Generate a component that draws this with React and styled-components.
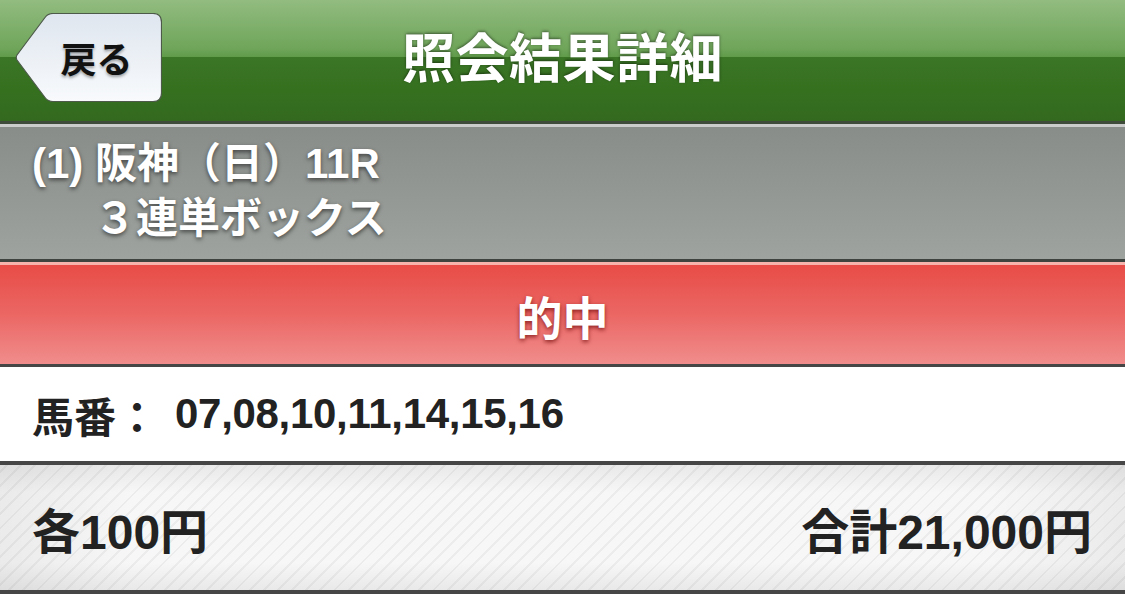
import React from 'react';
import styled, { createGlobalStyle } from 'styled-components';

const GlobalStyle = createGlobalStyle`
  html, body {
    margin: 0;
    padding: 0;
    background: #ffffff;
  }
  body {
    font-family: "Liberation Sans", "Noto Sans CJK JP", sans-serif;
    font-weight: bold;
  }
`;

const Page = styled.div`
  width: 1125px;
  display: flex;
  flex-direction: column;
`;

const Header = styled.header`
  position: relative;
  height: 121px;
  display: flex;
  align-items: center;
  justify-content: center;
  background: linear-gradient(
    to bottom,
    #92bc80 0%,
    #6fa55a 40%,
    #609b4a 47%,
    #3b7526 47%,
    #35701f 75%,
    #33691f 100%
  );
  border-bottom: 3px solid #3e4a3a;
  box-shadow: 0 3px 0 #c9ccca;
  margin-bottom: 3px;
`;

const Title = styled.h1`
  margin: 0;
  font-size: 53px;
  color: #ffffff;
  letter-spacing: 0.5px;
  text-shadow: 0 -1px 3px rgba(0, 0, 0, 0.5);
  transform: translateY(-6px);
`;

const BackButton = styled.button`
  position: absolute;
  left: 15px;
  top: 13px;
  width: 147px;
  height: 89px;
  padding: 0 0 0 16px;
  border: none;
  background: none;
  display: flex;
  align-items: center;
  justify-content: center;
  cursor: pointer;
  font-family: inherit;
  font-weight: bold;
  font-size: 36px;
  color: #111;
  text-shadow: 0 2px 3px rgba(0, 0, 0, 0.35);

  svg {
    position: absolute;
    inset: 0;
    z-index: 0;
  }

  span {
    position: relative;
    z-index: 1;
    transform: translateY(-1px);
  }
`;

const RaceInfo = styled.section`
  height: 135px;
  box-sizing: border-box;
  padding: 9px 32px 0;
  background: linear-gradient(to bottom, #898d8a 0%, #959a96 60%, #9ea39f 100%);
  border-bottom: 3px solid #3f4340;
  color: #ffffff;
  font-size: 42px;
  line-height: 55px;
  text-shadow: 0 2px 4px rgba(0, 0, 0, 0.55);
`;

const InfoLine = styled.div`
  padding-left: ${(p) => p.$indent || 0}px;
  font-size: ${(p) => p.$size || 42}px;
  white-space: nowrap;
`;

const Result = styled.section`
  height: 99px;
  display: flex;
  align-items: center;
  justify-content: center;
  border-top: 3px solid #f6b2ad;
  background: linear-gradient(to bottom, #e84c47 0%, #eb6764 50%, #f08d8c 100%);
  border-bottom: 3px solid #464646;
  color: #ffffff;
  font-size: 46px;
  text-shadow: 0 2px 4px rgba(110, 10, 10, 0.75);
`;

const Numbers = styled.section`
  height: 94px;
  display: flex;
  align-items: center;
  padding: 0 32px;
  background: #ffffff;
  border-bottom: 4px solid #464646;
  color: #222;
  font-size: 42px;
`;

const NumLabel = styled.span`
  margin-right: 17px;
`;

const NumValue = styled.span`
  letter-spacing: -0.3px;
`;

const Amount = styled.section`
  height: 125px;
  display: flex;
  align-items: center;
  justify-content: space-between;
  padding: 0 33px 0 32px;
  background:
    linear-gradient(to bottom, rgba(0, 0, 0, 0.06) 0%, rgba(0, 0, 0, 0) 22%, rgba(0, 0, 0, 0) 78%, rgba(0, 0, 0, 0.06) 100%),
    linear-gradient(to right, rgba(0, 0, 0, 0.05) 0%, rgba(0, 0, 0, 0) 12%, rgba(0, 0, 0, 0) 88%, rgba(0, 0, 0, 0.05) 100%),
    repeating-linear-gradient(-45deg, #f7f7f7 0px, #f7f7f7 8px, #ececec 8px, #ececec 10px);
  border-bottom: 4px solid #464646;
  color: #222;
  font-size: 48px;
`;

const AmountText = styled.span`
  white-space: nowrap;
`;

const BackShape = () => (
  <svg width="147" height="89" viewBox="0 0 147 89">
    <defs>
      <linearGradient id="backGrad" x1="0" y1="0" x2="0" y2="1">
        <stop offset="0" stopColor="#dfe6ef" />
        <stop offset="1" stopColor="#f8fafc" />
      </linearGradient>
    </defs>
    <path
      d="M38 0.5 H138 Q146.5 0.5 146.5 9 V80 Q146.5 88.5 138 88.5 H38 Q33 88.5 30 84.5 L2 47 Q0.5 44.5 2 42 L30 4.5 Q33 0.5 38 0.5 Z"
      fill="url(#backGrad)"
      stroke="#4d5a4a"
      strokeWidth="1.2"
    />
  </svg>
);

export default function App() {
  return (
    <>
      <GlobalStyle />
      <Page>
        <Header>
          <BackButton>
            <BackShape />
            <span>戻る</span>
          </BackButton>
          <Title>照会結果詳細</Title>
        </Header>

        <RaceInfo>
          <InfoLine>(1) 阪神（日）11R</InfoLine>
          <InfoLine $indent={62} $size={42}>３連単ボックス</InfoLine>
        </RaceInfo>

        <Result>的中</Result>

        <Numbers>
          <NumLabel>馬番：</NumLabel>
          <NumValue>07,08,10,11,14,15,16</NumValue>
        </Numbers>

        <Amount>
          <AmountText>各100円</AmountText>
          <AmountText>合計21,000円</AmountText>
        </Amount>
      </Page>
    </>
  );
}
